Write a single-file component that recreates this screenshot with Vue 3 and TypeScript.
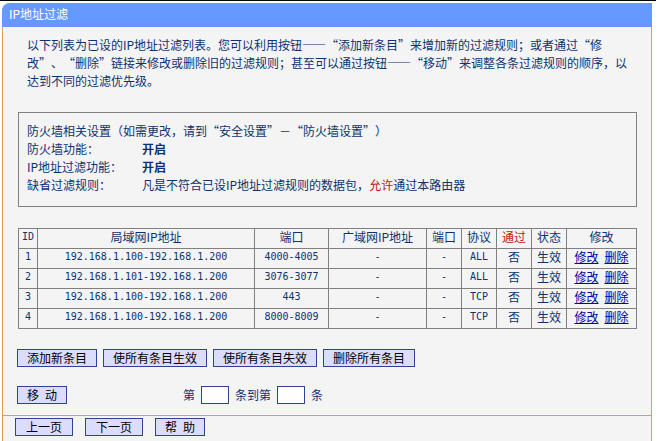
<script setup lang="ts">
import { ref } from 'vue'

interface FilterRule {
  id: number
  lanIp: string
  lanPort: string
  wanIp: string
  wanPort: string
  protocol: string
  pass: string
  status: string
}

const rules: FilterRule[] = [
  { id: 1, lanIp: '192.168.1.100-192.168.1.200', lanPort: '4000-4005', wanIp: '-', wanPort: '-', protocol: 'ALL', pass: '否', status: '生效' },
  { id: 2, lanIp: '192.168.1.101-192.168.1.200', lanPort: '3076-3077', wanIp: '-', wanPort: '-', protocol: 'ALL', pass: '否', status: '生效' },
  { id: 3, lanIp: '192.168.1.100-192.168.1.200', lanPort: '443', wanIp: '-', wanPort: '-', protocol: 'TCP', pass: '否', status: '生效' },
  { id: 4, lanIp: '192.168.1.100-192.168.1.200', lanPort: '8000-8009', wanIp: '-', wanPort: '-', protocol: 'TCP', pass: '否', status: '生效' },
]

const bulkActions: string[] = ['添加新条目', '使所有条目生效', '使所有条目失效', '删除所有条目']
const moveFrom = ref('')
const moveTo = ref('')
</script>

<template>
  <div class="page" lang="zh-CN">
    <div class="rule-line"></div>
    <main class="panel">
      <h1 class="title">IP地址过滤</h1>

      <div class="body">
        <p class="intro">以下列表为已设的IP地址过滤列表。您可以利用按钮——“添加新条目”来增加新的过滤规则；或者通过“修改”、“删除”链接来修改或删除旧的过滤规则；甚至可以通过按钮——“移动”来调整各条过滤规则的顺序，以达到不同的过滤优先级。</p>

        <section class="settings">
          <p>防火墙相关设置（如需更改，请到“安全设置”－“防火墙设置”）</p>
          <dl>
            <dt>防火墙功能：</dt>
            <dd><b>开启</b></dd>
            <dt>IP地址过滤功能：</dt>
            <dd><b>开启</b></dd>
            <dt>缺省过滤规则：</dt>
            <dd>凡是不符合已设IP地址过滤规则的数据包，<span class="red">允许</span>通过本路由器</dd>
          </dl>
        </section>

        <table class="rules">
          <colgroup>
            <col class="c-id" />
            <col />
            <col class="c-port" />
            <col class="c-wan" />
            <col class="c-short" />
            <col class="c-short" />
            <col class="c-short" />
            <col class="c-short" />
            <col class="c-edit" />
          </colgroup>
          <thead>
            <tr>
              <th class="mono">ID</th>
              <th>局域网IP地址</th>
              <th>端口</th>
              <th>广域网IP地址</th>
              <th>端口</th>
              <th>协议</th>
              <th class="red">通过</th>
              <th>状态</th>
              <th>修改</th>
            </tr>
          </thead>
          <tbody>
            <tr v-for="rule in rules" :key="rule.id">
              <td class="mono">{{ rule.id }}</td>
              <td class="mono">{{ rule.lanIp }}</td>
              <td class="mono">{{ rule.lanPort }}</td>
              <td class="mono">{{ rule.wanIp }}</td>
              <td class="mono">{{ rule.wanPort }}</td>
              <td class="mono">{{ rule.protocol }}</td>
              <td>{{ rule.pass }}</td>
              <td>{{ rule.status }}</td>
              <td>
                <div class="links"><a href="#">修改</a><a href="#">删除</a></div>
              </td>
            </tr>
          </tbody>
        </table>

        <div class="bulk">
          <button v-for="label in bulkActions" :key="label" type="button" class="btn">{{ label }}</button>
        </div>

        <form class="move" @submit.prevent>
          <button type="submit" class="btn short"><span>移</span><span>动</span></button>
          <div class="range">
            <label for="move-from">第</label>
            <input id="move-from" v-model="moveFrom" type="text" />
            <label for="move-to">条到第</label>
            <input id="move-to" v-model="moveTo" type="text" />
            <span>条</span>
          </div>
        </form>
      </div>

      <footer class="footer">
        <button type="button" class="btn pager">上一页</button>
        <button type="button" class="btn pager">下一页</button>
        <button type="button" class="btn short"><span>帮</span><span>助</span></button>
      </footer>
    </main>
  </div>
</template>

<style>
body {
  margin: 0;
  background: #fff;
}
</style>

<style scoped>
.page {
  box-sizing: border-box;
  display: flex;
  flex-direction: column;
  min-height: 100vh;
  padding-right: 11px;
  font-family: "Noto Sans CJK SC", "Liberation Sans", sans-serif;
  font-size: 12px;
  line-height: 18px;
  color: #0c3270;
  text-spacing-trim: space-all;
}
.rule-line {
  height: 1px;
  background: #000;
}
.panel {
  flex: 1;
  display: flex;
  flex-direction: column;
  margin: 2px 4px 0 2px;
  border: solid #d9a050;
  border-width: 0 1px;
  border-radius: 8px 0 0 0;
  background: #f4f4f4;
}
.title {
  margin: 0 -1px;
  padding: 2px 7px 4px;
  border-radius: 8px 0 0 0;
  background: #6699ff;
  color: #fff;
  font-size: 12px;
  font-weight: 400;
  line-height: 18px;
}
.body {
  padding: 9px 14px 11px;
}
.intro {
  margin: 0 8px 22px 10px;
}
.settings {
  margin: 0 0 21px 1px;
  padding: 9px 8px 12px;
  border: 1px solid #808080;
}
.settings p,
.settings dl,
.settings dd {
  margin: 0;
}
.settings dl {
  display: grid;
  grid-template-columns: 115px 1fr;
}
.red {
  color: #c81414;
}
.rules {
  width: calc(100% - 1px);
  margin-left: 1px;
  table-layout: fixed;
  border-collapse: collapse;
}
.rules th,
.rules td {
  height: 19px;
  padding: 0;
  border: 1px solid #808080;
  font-weight: 400;
  line-height: 16px;
  text-align: center;
  vertical-align: top;
  white-space: nowrap;
}
.rules .mono {
  font-family: "DejaVu Sans Mono", "Noto Sans CJK SC", monospace;
  font-size: 10px;
}
.c-id { width: 19px; }
.c-port { width: 74px; }
.c-wan { width: 98px; }
.c-short { width: 35px; }
.c-edit { width: 70px; }
.links {
  display: flex;
  justify-content: center;
  gap: 6px;
}
.links a {
  color: #0000a8;
}
.bulk {
  display: flex;
  gap: 6px;
  margin-top: 20px;
}
.btn {
  height: 18px;
  padding: 0 9px;
  border: 1px solid #2c4494;
  border-radius: 0;
  background: #dcdcff;
  color: #000;
  font: inherit;
  line-height: 16px;
}
.short {
  display: flex;
  gap: 6px;
}
.pager {
  width: 58px;
}
.move {
  display: flex;
  gap: 116px;
  margin-top: 19px;
}
.range {
  display: flex;
  gap: 6px;
}
.range input {
  box-sizing: border-box;
  width: 28px;
  height: 18px;
  padding: 0 2px;
  border: 1px solid #2c4494;
  background: #fff;
  font: inherit;
}
.footer {
  display: flex;
  gap: 12px;
  padding: 2px 12px 4px;
  border-top: 1px solid #d9a050;
}
</style>
